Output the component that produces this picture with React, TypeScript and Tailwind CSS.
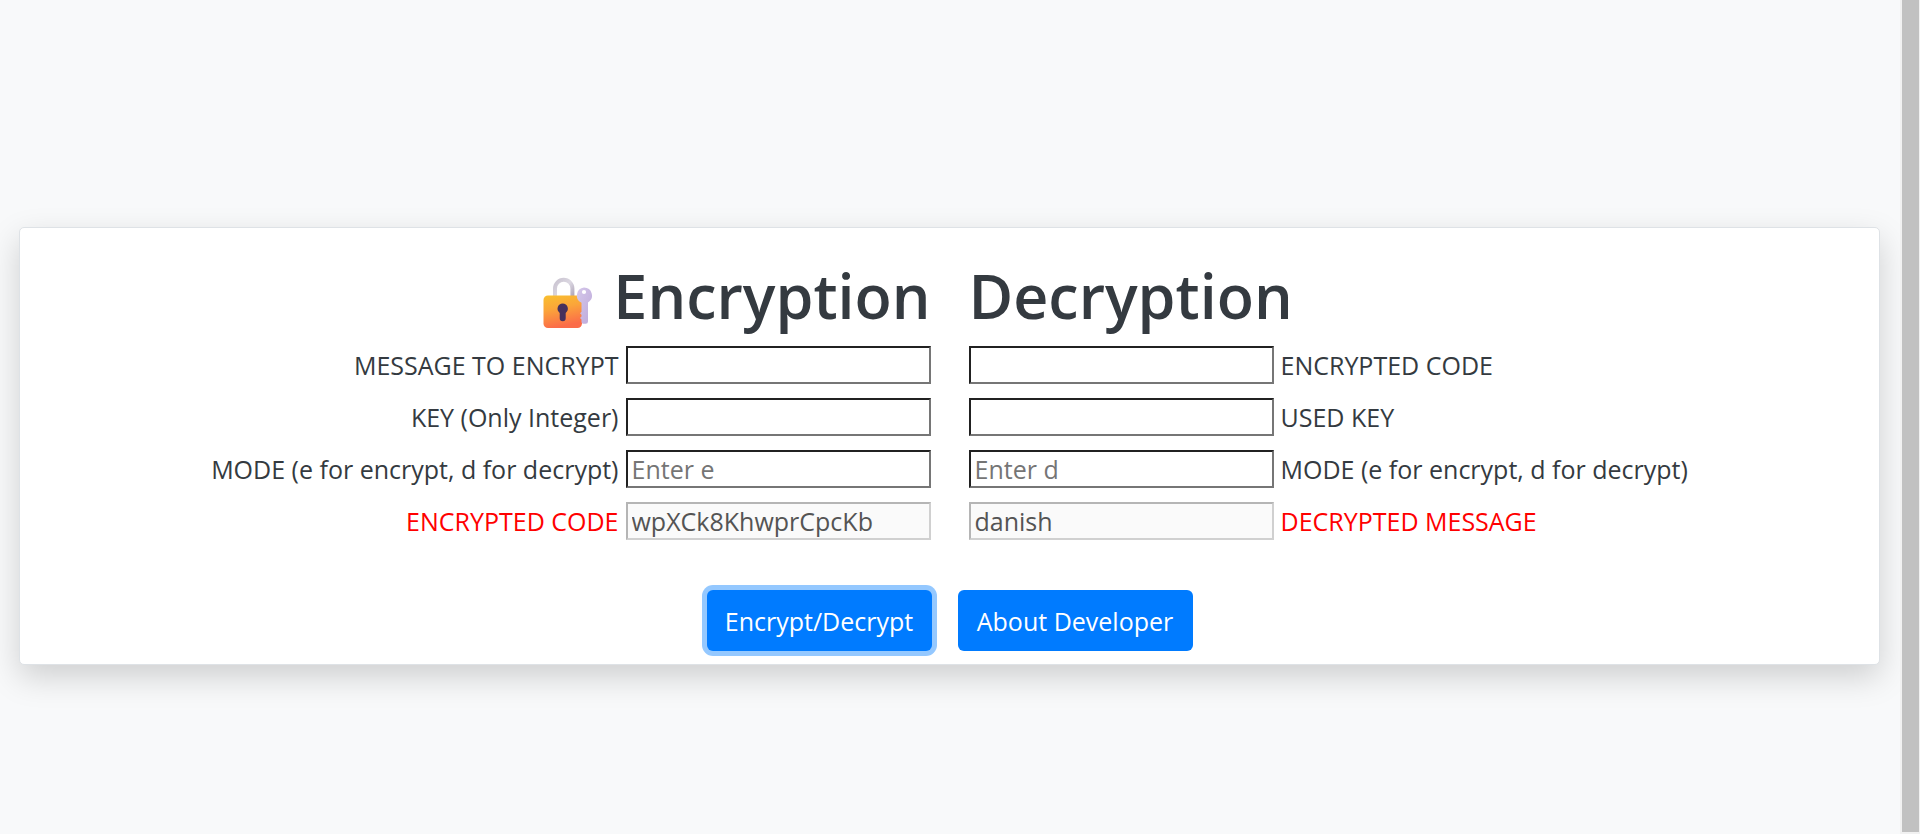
import { useState } from "react";
import type { ReactNode } from "react";

type Side = "left" | "right";

interface FieldProps {
  id: string;
  label: string;
  side: Side;
  placeholder?: string;
  output?: string;
}

function Field({ id, label, side, placeholder, output }: FieldProps) {
  const [value, setValue] = useState("");
  const isOutput = output !== undefined;
  return (
    <div
      className={
        side === "left"
          ? "flex items-center justify-end gap-[7px]"
          : "flex flex-row-reverse items-center justify-end gap-[7px]"
      }
    >
      <label htmlFor={id} className={isOutput ? "whitespace-nowrap text-[#ff0000]" : "whitespace-nowrap"}>
        {label}
      </label>
      <input
        id={id}
        type="text"
        disabled={isOutput}
        value={isOutput ? output : value}
        onChange={(e) => setValue(e.target.value)}
        placeholder={placeholder}
        className="h-[38px] w-[305px] shrink-0 border-2 border-t-[#212121] border-r-[#767676] border-b-[#767676] border-l-[#212121] bg-white px-1 text-black placeholder:text-[#757575] disabled:border-t-[#b5b5b5] disabled:border-r-[#d0d0d0] disabled:border-b-[#d0d0d0] disabled:border-l-[#b5b5b5] disabled:bg-[#fafafa] disabled:text-[#545454]"
      />
    </div>
  );
}

function LockIcon() {
  return (
    <svg viewBox="0 0 50 52" className="mt-[14px] h-[52px] w-[50px]" aria-hidden="true">
      <defs>
        <linearGradient id="body" x1="0" y1="0" x2="0.25" y2="1">
          <stop offset="0" stopColor="#f9c02e" />
          <stop offset="0.45" stopColor="#fba53a" />
          <stop offset="1" stopColor="#fb6c49" />
        </linearGradient>
        <linearGradient id="shackle" x1="0" y1="0" x2="1" y2="1">
          <stop offset="0" stopColor="#c9c3d0" />
          <stop offset="0.5" stopColor="#dcd8e2" />
          <stop offset="1" stopColor="#aaa0b5" />
        </linearGradient>
        <linearGradient id="key" x1="0" y1="0" x2="1" y2="1">
          <stop offset="0" stopColor="#d5c8ea" />
          <stop offset="1" stopColor="#bda9da" />
        </linearGradient>
      </defs>
      <path d="M12 22V11.500a8.700 8.700 0 0 1 17.400 0V22" fill="none" stroke="url(#shackle)" strokeWidth="4" />
      <rect x="0.500" y="18.500" width="38.500" height="32.500" rx="4.500" fill="url(#body)" />
      <path
        d="M19.700 26.500a5.200 5.200 0 0 1 3 9.400v5.300a3 3 0 0 1-6 0v-5.300a5.200 5.200 0 0 1 3-9.400z"
        fill="#46305c"
      />
      <path
        d="M41 10.500a8 8 0 0 1 4 14.900V44.500q0 2.300-2.300 2.300h-2.500q-1.700 0-1.700-1.700v-2.600l-1.500-1.500 1.500-1.500v-1.700l-1.500-1.500 1.500-1.500v-9.100A8 8 0 0 1 41 10.500z"
        fill="url(#key)"
      />
      <circle cx="41" cy="15" r="2.100" fill="#ffffff" />
    </svg>
  );
}

function Heading({ children }: { children: ReactNode }) {
  return <h1 className="text-[61px] leading-[72px] font-semibold text-[#343a40]">{children}</h1>;
}

export default function App() {
  return (
    <div className="flex min-h-screen bg-[#f8f9fa] font-['Open_Sans','Noto_Sans',sans-serif] text-[25px] leading-[38px] text-[#343a40]">
      <main className="min-w-0 flex-1 pt-[227px] pr-5 pb-[60px] pl-[19px]">
        <form
          onSubmit={(e) => e.preventDefault()}
          className="rounded-[5px] border border-[#dee2e6] bg-white pt-8 pb-[13px] shadow-[0_12px_32px_rgba(0,0,0,0.17)]"
        >
          <div className="grid grid-cols-2 gap-[38px]">
            <section className="flex flex-col gap-[14px]">
              <div className="flex items-center justify-end gap-5">
                <LockIcon />
                <Heading>Encryption</Heading>
              </div>
              <Field id="message" label="MESSAGE TO ENCRYPT" side="left" />
              <Field id="key-in" label="KEY (Only Integer)" side="left" />
              <Field id="mode-e" label="MODE (e for encrypt, d for decrypt)" side="left" placeholder="Enter e" />
              <Field id="encrypted" label="ENCRYPTED CODE" side="left" output="wpXCk8KhwprCpcKb" />
            </section>
            <section className="flex flex-col gap-[14px]">
              <div className="flex items-center">
                <Heading>Decryption</Heading>
              </div>
              <Field id="code" label="ENCRYPTED CODE" side="right" />
              <Field id="used-key" label="USED KEY" side="right" />
              <Field id="mode-d" label="MODE (e for encrypt, d for decrypt)" side="right" placeholder="Enter d" />
              <Field id="decrypted" label="DECRYPTED MESSAGE" side="right" output="danish" />
            </section>
          </div>
          <div className="mt-[50px] flex justify-center gap-[26px]">
            <button
              type="submit"
              className="h-[61px] w-[225px] rounded-md bg-[#007bff] text-white shadow-[0_0_0_5px_#94c8ff]"
            >
              Encrypt/Decrypt
            </button>
            <button type="button" className="h-[61px] w-[235px] rounded-md bg-[#007bff] text-white">
              About Developer
            </button>
          </div>
        </form>
      </main>
      <div className="flex w-5 shrink-0 bg-[#f1f1f1] pr-px pb-0.5 pl-0.5" aria-hidden="true">
        <div className="flex-1 bg-[#c1c1c1]" />
      </div>
    </div>
  );
}
